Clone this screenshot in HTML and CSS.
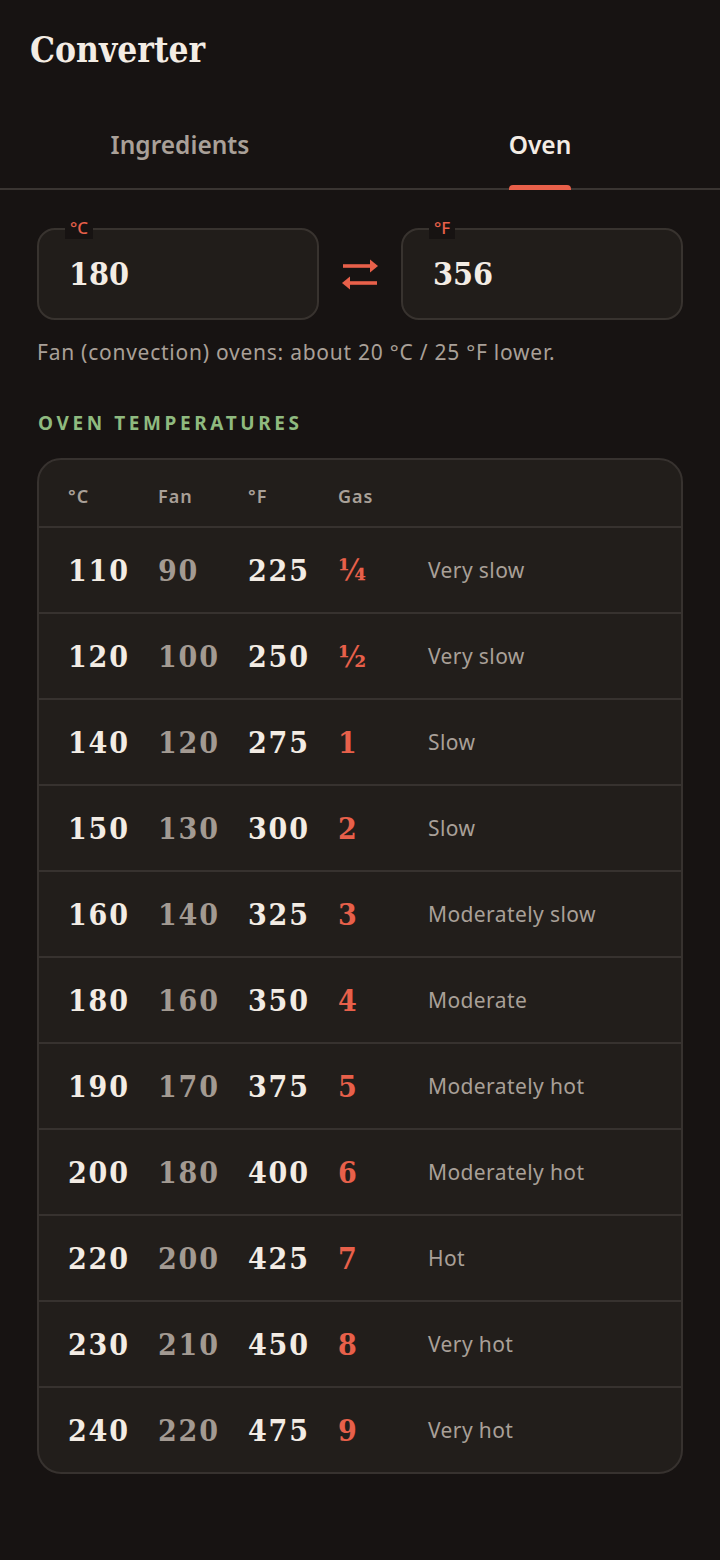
FILE: index.html
```html
<!DOCTYPE html>
<html lang="en">
<head>
<meta charset="utf-8">
<title>Converter</title>
<link rel="stylesheet" href="styles.css">
</head>
<body>
<div class="app">
  <header class="top">
    <h1 class="title">Converter</h1>
  </header>
  <nav class="tabs">
    <div class="tab">Ingredients</div>
    <div class="tab active">Oven<span class="indicator"></span></div>
  </nav>
  <main class="content">
    <div class="converter">
      <div class="field">
        <span class="field-label">°C</span>
        <span class="field-value">180</span>
      </div>
      <div class="swap">
        <svg width="36" height="32" viewBox="0 0 36 32">
          <path d="M1 8 H29" stroke="#e8604a" stroke-width="3.6" fill="none"/>
          <path d="M28 1.5 L36 8 L28 14.5 Z" fill="#e8604a"/>
          <path d="M7 25 H35" stroke="#e8604a" stroke-width="3.6" fill="none"/>
          <path d="M8 18.5 L0 25 L8 31.5 Z" fill="#e8604a"/>
        </svg>
      </div>
      <div class="field">
        <span class="field-label">°F</span>
        <span class="field-value">356</span>
      </div>
    </div>
    <p class="note">Fan (convection) ovens: about 20 °C / 25 °F lower.</p>
    <h2 class="section">OVEN TEMPERATURES</h2>
    <div class="table">
      <div class="row head">
        <span class="c">°C</span><span class="c">Fan</span><span class="c">°F</span><span class="c">Gas</span><span class="d"></span>
      </div>
      <div class="row"><span class="c num">110</span><span class="c num fan">90</span><span class="c num">225</span><span class="c num gas">¼</span><span class="d">Very slow</span></div>
      <div class="row"><span class="c num">120</span><span class="c num fan">100</span><span class="c num">250</span><span class="c num gas">½</span><span class="d">Very slow</span></div>
      <div class="row"><span class="c num">140</span><span class="c num fan">120</span><span class="c num">275</span><span class="c num gas">1</span><span class="d">Slow</span></div>
      <div class="row"><span class="c num">150</span><span class="c num fan">130</span><span class="c num">300</span><span class="c num gas">2</span><span class="d">Slow</span></div>
      <div class="row"><span class="c num">160</span><span class="c num fan">140</span><span class="c num">325</span><span class="c num gas">3</span><span class="d">Moderately slow</span></div>
      <div class="row"><span class="c num">180</span><span class="c num fan">160</span><span class="c num">350</span><span class="c num gas">4</span><span class="d">Moderate</span></div>
      <div class="row"><span class="c num">190</span><span class="c num fan">170</span><span class="c num">375</span><span class="c num gas">5</span><span class="d">Moderately hot</span></div>
      <div class="row"><span class="c num">200</span><span class="c num fan">180</span><span class="c num">400</span><span class="c num gas">6</span><span class="d">Moderately hot</span></div>
      <div class="row"><span class="c num">220</span><span class="c num fan">200</span><span class="c num">425</span><span class="c num gas">7</span><span class="d">Hot</span></div>
      <div class="row"><span class="c num">230</span><span class="c num fan">210</span><span class="c num">450</span><span class="c num gas">8</span><span class="d">Very hot</span></div>
      <div class="row"><span class="c num">240</span><span class="c num fan">220</span><span class="c num">475</span><span class="c num gas">9</span><span class="d">Very hot</span></div>
    </div>
  </main>
</div>
</body>
</html>
```

FILE: styles.css
```css
* { box-sizing: border-box; }
html, body { margin: 0; padding: 0; }
body {
  background: #171312;
  color: #f3ece4;
  font-family: "Noto Sans", "Open Sans", sans-serif;
  width: 720px;
  min-height: 1560px;
}
.top {
  height: 100px;
  padding: 27px 30px 0;
}
.title {
  margin: 0;
  font-family: "DejaVu Serif Condensed", "DejaVu Serif", serif;
  font-stretch: condensed;
  font-weight: 700;
  font-size: 35px;
  line-height: 46px;
  color: #f3ece4;
}
.tabs {
  display: flex;
  height: 90px;
  border-bottom: 2px solid #3a3532;
}
.tab {
  flex: 1;
  display: flex;
  align-items: center;
  justify-content: center;
  position: relative;
  font-size: 24.5px;
  font-weight: 600;
  color: #a9a098;
}
.tab.active { color: #f3ece4; }
.indicator {
  position: absolute;
  bottom: -2px;
  left: 50%;
  width: 62px;
  margin-left: -31px;
  height: 5px;
  border-radius: 4px 4px 0 0;
  background: #e8604a;
}
.content { padding: 38px 37px 0; }
.converter {
  display: flex;
  align-items: center;
}
.field {
  position: relative;
  width: 282px;
  height: 92px;
  background: #211d1a;
  border: 2px solid #38332f;
  border-radius: 18px;
  display: flex;
  align-items: center;
  padding-left: 30px;
}
.field-label {
  position: absolute;
  top: -13px;
  left: 26px;
  padding: 0 5px;
  background: #171312;
  color: #e8604a;
  font-size: 17px;
  font-weight: 500;
  line-height: 22px;
}
.field-value {
  font-family: "DejaVu Serif Condensed", "DejaVu Serif", serif;
  font-stretch: condensed;
  font-weight: 700;
  font-size: 32px;
  color: #f3ece4;
}
.swap {
  width: 82px;
  display: flex;
  justify-content: center;
}
.note {
  margin: 17px 0 0;
  font-size: 21px;
  line-height: 30px;
  letter-spacing: 0.75px;
  color: #a9a098;
}
.section {
  margin: 43px 0 0 1px;
  font-size: 19px;
  font-weight: 700;
  letter-spacing: 3.6px;
  color: #8fba7f;
  line-height: 26px;
}
.table {
  margin-top: 22px;
  background: #221e1b;
  border: 2px solid #37322f;
  border-radius: 24px;
  overflow: hidden;
}
.row {
  display: flex;
  align-items: center;
  height: 86px;
  padding-left: 29px;
  border-top: 2px solid #37322f;
}
.row.head {
  height: 66px;
  padding-top: 5px;
  border-top: none;
}
.row.head .c {
  font-size: 18px;
  font-weight: 600;
  color: #a9a098;
  letter-spacing: 1px;
}
.c { width: 90px; flex: none; }
.num {
  font-family: "DejaVu Serif Condensed", "DejaVu Serif", serif;
  font-stretch: condensed;
  font-weight: 700;
  font-size: 30px;
  letter-spacing: 1.8px;
  color: #f3ece4;
}
.num.fan { color: #a39a92; }
.num.gas { color: #e8604a; }
.d {
  font-size: 21px;
  color: #a9a098;
  letter-spacing: 0.4px;
}
```
